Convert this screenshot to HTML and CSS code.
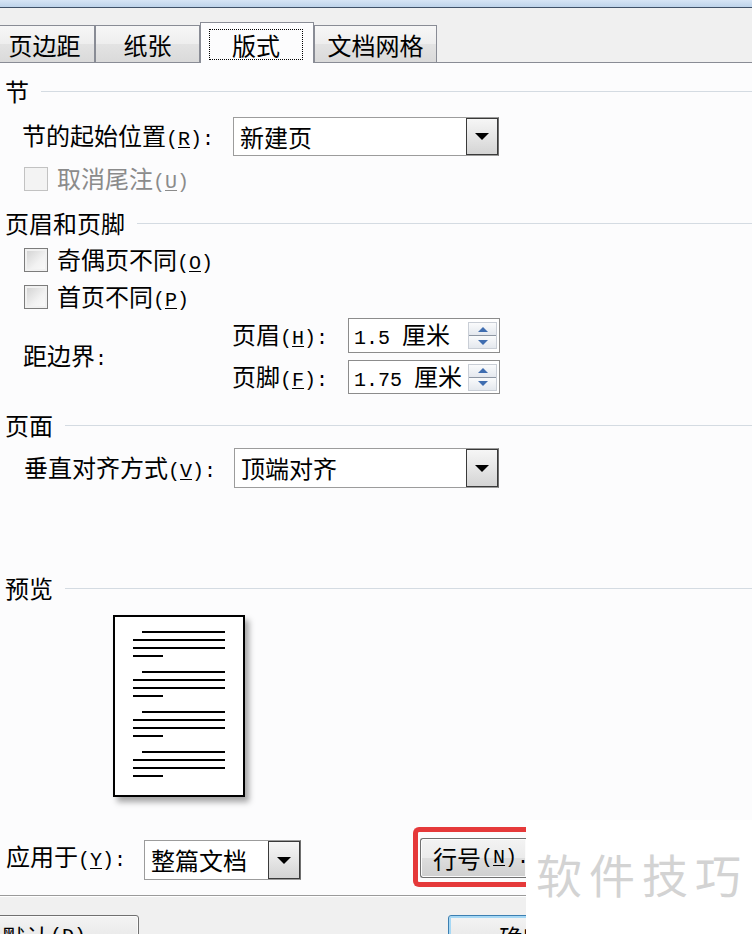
FILE: index.html
```html
<!DOCTYPE html>
<html lang="zh-CN">
<head>
<meta charset="utf-8">
<title>页面设置 - 版式</title>
<link rel="stylesheet" href="styles.css">
</head>
<body>
<div class="dialog">
  <div class="titlebar"></div>
  <div class="tabbar">
    <div class="tab tab-1">页边距</div>
    <div class="tab tab-2">纸张</div>
    <div class="tab tab-3 active"><span class="focus">版式</span></div>
    <div class="tab tab-4">文档网格</div>
  </div>

  <div class="panel">
    <div class="sec sec-1"><span>节</span><i class="rule"></i></div>
    <div class="field field-start">
      <span class="flabel">节的起始位置<span class="acc">(<u>R</u>):</span></span>
      <div class="dd dd-wide"><span class="dd-text">新建页</span><span class="dd-btn"><i class="tri"></i></span></div>
    </div>
    <div class="check check-1 disabled"><span class="cb"></span><span>取消尾注<span class="acc">(<u>U</u>)</span></span></div>

    <div class="sec sec-2"><span>页眉和页脚</span><i class="rule"></i></div>
    <div class="check check-2"><span class="cb"></span><span>奇偶页不同<span class="acc">(<u>O</u>)</span></span></div>
    <div class="check check-3"><span class="cb"></span><span>首页不同<span class="acc">(<u>P</u>)</span></span></div>
    <div class="margins">
      <div class="mlabel">距边界<span class="acc">:</span></div>
      <div class="mrows">
        <div class="mrow mrow-1">
          <span class="slabel">页眉<span class="acc">(<u>H</u>):</span></span>
          <div class="spin"><span class="spin-text"><span class="num">1.5 </span>厘米</span><span class="spin-btns"><span class="half up"><i></i></span><span class="half down"><i></i></span></span></div>
        </div>
        <div class="mrow mrow-2">
          <span class="slabel">页脚<span class="acc">(<u>F</u>):</span></span>
          <div class="spin"><span class="spin-text"><span class="num">1.75 </span>厘米</span><span class="spin-btns"><span class="half up"><i></i></span><span class="half down"><i></i></span></span></div>
        </div>
      </div>
    </div>

    <div class="sec sec-3"><span>页面</span><i class="rule"></i></div>
    <div class="field field-valign">
      <span class="flabel">垂直对齐方式<span class="acc">(<u>V</u>):</span></span>
      <div class="dd dd-wide2"><span class="dd-text">顶端对齐</span><span class="dd-btn"><i class="tri"></i></span></div>
    </div>

    <div class="sec sec-4"><span>预览</span><i class="rule"></i></div>
    <div class="preview">
      <div class="para"><i class="ln first"></i><i class="ln"></i><i class="ln"></i><i class="ln short"></i></div>
      <div class="para"><i class="ln first"></i><i class="ln"></i><i class="ln"></i><i class="ln short"></i></div>
      <div class="para"><i class="ln first"></i><i class="ln"></i><i class="ln"></i><i class="ln short"></i></div>
      <div class="para"><i class="ln first"></i><i class="ln"></i><i class="ln"></i><i class="ln short"></i></div>
    </div>

    <div class="apply">
      <span class="alabel">应用于<span class="acc">(<u>Y</u>):</span></span>
      <div class="dd dd-small"><span class="dd-text">整篇文档</span><span class="dd-btn"><i class="tri"></i></span></div>
      <div class="highlight"><span class="btn btn-lineno">行号<span class="acc">(<u>N</u>).</span></span></div>
    </div>
  </div>

  <div class="footer">
    <span class="btn btn-default">默认<span class="acc">(<u>D</u>)...</span></span>
    <span class="btn btn-ok">确定</span>
  </div>

  <div class="watermark">软件技巧</div>
</div>
</body>
</html>
```

FILE: styles.css
```css
* { box-sizing: border-box; }
html, body { margin: 0; padding: 0; }
body {
  width: 752px;
  height: 934px;
  overflow: hidden;
  background: #fcfcfd;
  font-family: "Noto Sans CJK SC", "Noto Sans", sans-serif;
  font-size: 24px;
  line-height: 1;
  color: #000;
}
.dialog {
  position: relative;
  width: 752px;
  height: 934px;
  display: flex;
  flex-direction: column;
  overflow: hidden;
}
.acc {
  font-family: "Liberation Mono", monospace;
  font-size: 20px;
}
.acc u { text-decoration-thickness: 1px; text-underline-offset: 2px; }
i { display: block; font-style: normal; }

/* title + tabs */
.titlebar {
  height: 8px;
  flex: none;
  background: linear-gradient(#d6e5f5, #bed3ea);
  border-bottom: 1px solid #3f5168;
}
.tabbar {
  height: 54px;
  flex: none;
  background: #f0f0f0;
  display: flex;
  align-items: flex-end;
}
.tab {
  height: 37px;
  border: 1px solid #898c95;
  border-bottom: none;
  background: linear-gradient(#f7f7f7, #eeeeee 50%, #e3e3e3 51%, #dadada);
  display: flex;
  align-items: center;
  justify-content: center;
  padding-top: 1px;
}
.tab-1 { width: 101px; margin-left: -6px; }
.tab-2 { width: 105px; }
.tab-3 { width: 114px; }
.tab-4 { width: 123px; }
.tab.active {
  position: relative;
  z-index: 1;
  height: 41px;
  margin-bottom: -1px;
  background: #fcfcfd;
  padding: 6px 10px 3px 8px;
  align-items: stretch;
}
.focus {
  flex: 1;
  border: 1px dotted #000;
  display: flex;
  align-items: center;
  justify-content: center;
  padding-top: 1px;
}

/* panel */
.panel {
  height: 834px;
  flex: none;
  border-top: 1px solid #898c95;
  border-bottom: 1px solid #9a9a9a;
  padding: 15px 0 8px;
  display: flex;
  flex-direction: column;
}
.sec {
  height: 26px;
  flex: none;
  display: flex;
  align-items: center;
  padding-left: 5px;
}
.sec .rule {
  flex: 1;
  height: 1px;
  background: #d4dbe2;
  margin-left: 12px;
}
.sec-2 { margin-top: 19px; }
.sec-3 { margin-top: 18px; }
.sec-4 { margin-top: 87px; }

.field {
  display: flex;
  align-items: center;
  flex: none;
}
.field-start { height: 39px; margin-top: 13px; padding-left: 22px; }
.field-start .flabel { width: 211px; }
.field-valign { height: 40px; margin-top: 10px; padding-left: 24px; }
.field-valign .flabel { width: 210px; }

.dd {
  height: 100%;
  border: 1px solid #9c9c9c;
  border-right-color: #6f6f6f;
  background: #fff;
  display: flex;
  align-items: stretch;
}
.dd-wide { width: 266px; }
.dd-wide2 { width: 265px; }
.dd-text {
  flex: 1;
  display: flex;
  align-items: center;
  padding-left: 6px;
}
.dd-btn {
  width: 32px;
  border: 1px solid #3a3a3a;
  background: linear-gradient(#f6f6f6, #e6e6e6 50%, #d4d4d4);
  display: flex;
  align-items: center;
  justify-content: center;
}
.tri {
  width: 0;
  height: 0;
  border-left: 7px solid transparent;
  border-right: 7px solid transparent;
  border-top: 7px solid #000;
}

.check {
  height: 24px;
  flex: none;
  display: flex;
  align-items: center;
  gap: 9px;
  padding-left: 24px;
}
.check-1 { margin-top: 11px; }
.check-2 { margin-top: 12px; }
.check-3 { margin-top: 13px; }
.cb {
  width: 24px;
  height: 24px;
  border: 1px solid #7c7c7c;
  background: linear-gradient(135deg, #cfcfcf, #f2f2f2 60%, #fbfbfb);
  box-shadow: inset 0 0 0 2px #f1f1f1;
}
.check.disabled { color: #8b8b8b; }
.check.disabled .cb {
  border-color: #c2c2c2;
  background: #f3f3f3;
  box-shadow: none;
}

/* margins */
.margins {
  margin-top: 9px;
  flex: none;
  display: flex;
  align-items: center;
  padding-left: 23px;
}
.mlabel { width: 209px; }
.mrows {
  display: flex;
  flex-direction: column;
  gap: 7px;
}
.mrow { display: flex; align-items: center; }
.mrow-1 { height: 35px; }
.mrow-2 { height: 34px; }
.slabel { width: 116px; }
.spin {
  width: 152px;
  height: 100%;
  border: 1px solid #8c8c8c;
  background: #fff;
  display: flex;
  align-items: center;
  padding-left: 5px;
}
.spin-text { flex: 1; }
.num {
  font-family: "Liberation Mono", monospace;
  font-size: 20px;
  white-space: pre;
}
.spin-btns {
  width: 29px;
  height: 27px;
  margin-right: 2px;
  display: flex;
  flex-direction: column;
  border: 1px solid #c9ced6;
}
.half {
  flex: 1;
  display: flex;
  align-items: center;
  justify-content: center;
  background: linear-gradient(#fafbfc, #e4e8ee);
}
.half.up { border-bottom: 1px solid #8d96a3; }
.half.up i {
  width: 0; height: 0;
  border-left: 5px solid transparent;
  border-right: 5px solid transparent;
  border-bottom: 5px solid #3f6db0;
}
.half.down i {
  width: 0; height: 0;
  border-left: 5px solid transparent;
  border-right: 5px solid transparent;
  border-top: 5px solid #3f6db0;
}

/* preview */
.preview {
  width: 132px;
  height: 182px;
  flex: none;
  margin: 14px 0 0 113px;
  border: 2px solid #000;
  background: #fff;
  box-shadow: 4px 5px 6px rgba(0, 0, 0, 0.35);
  padding: 14px 0 0 18px;
  display: flex;
  flex-direction: column;
  gap: 14px;
}
.para {
  display: flex;
  flex-direction: column;
  gap: 6px;
}
.ln { width: 92px; height: 2px; background: #000; }
.ln.first { width: 83px; margin-left: 9px; }
.ln.short { width: 30px; }

/* apply row */
.apply {
  height: 60px;
  flex: none;
  margin-top: 30px;
  display: flex;
  align-items: center;
  padding-left: 6px;
}
.alabel { width: 138px; }
.dd-small { width: 157px; height: 40px; margin-top: 6px; }
.highlight {
  margin-left: 112px;
  height: 60px;
  width: 113px;
  border: 5px solid #e5393a;
  border-right: none;
  border-radius: 6px 0 0 6px;
  padding: 6px 0 4px 2px;
  display: flex;
  overflow: hidden;
}
.btn {
  display: flex;
  align-items: center;
  border: 1px solid #707070;
  border-radius: 3px;
  background: linear-gradient(#f3f3f3, #ebebeb 50%, #dddddd 51%, #cfcfcf);
  box-shadow: inset 0 0 0 1px #fbfbfb;
  white-space: nowrap;
}
.btn-lineno {
  flex: 1;
  padding-left: 12px;
  border-right: none;
  border-radius: 3px 0 0 3px;
  overflow: hidden;
}

/* footer */
.footer {
  flex: 1;
  background: #f0f0f0;
  border-top: 1px solid #ffffff;
  padding-top: 18px;
  display: flex;
  align-items: flex-start;
}
.btn-default {
  width: 154px;
  height: 40px;
  margin-left: -15px;
  justify-content: center;
  padding-top: 4px;
}
.btn-ok {
  width: 150px;
  height: 40px;
  margin-left: 309px;
  justify-content: center;
  border: 1px solid #3c7fb1;
  box-shadow: inset 0 0 0 2px #a6d8f5;
  padding-top: 4px;
}

/* watermark overlay */
.watermark {
  position: absolute;
  left: 526px;
  top: 820px;
  width: 226px;
  height: 114px;
  background: #ffffff;
  color: #d3d3d3;
  font-size: 46px;
  letter-spacing: 7px;
  display: flex;
  align-items: center;
  padding: 0 0 8px 10px;
  white-space: nowrap;
}
```
